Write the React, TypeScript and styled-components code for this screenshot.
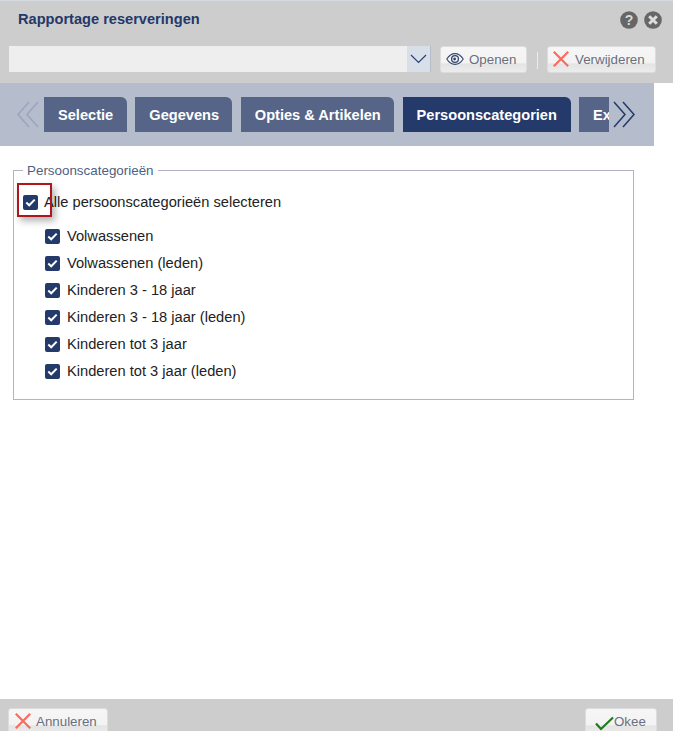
import styled, { createGlobalStyle } from 'styled-components'

const GlobalStyle = createGlobalStyle`
  html, body {
    margin: 0;
    padding: 0;
    height: 100%;
    overflow: hidden;
    background: #fff;
  }
  * { box-sizing: border-box; }
`

const Dialog = styled.div`
  width: 673px;
  height: 731px;
  display: flex;
  flex-direction: column;
  font-family: "Liberation Sans", Arial, sans-serif;
  font-size: 14.67px;
  color: #222;
`

const Header = styled.header`
  height: 83px;
  flex: none;
  background: #cdcdcd;
  border-top: 1px solid #d6dae2;
  padding: 10px 17px 0 9px;
`

const TitleRow = styled.div`
  height: 35px;
  display: flex;
  justify-content: space-between;
  padding-left: 9px;
`

const Title = styled.h1`
  margin: 0;
  font-size: 14.6px;
  line-height: 16px;
  font-weight: bold;
  color: #24386a;
`

const RoundIcons = styled.div`
  display: flex;
  gap: 6px;
  margin-right: -6px;
  height: 18px;
`

const ToolRow = styled.div`
  display: flex;
  align-items: flex-start;
`

const SelectBox = styled.div`
  width: 422px;
  height: 26px;
  background: #eeeeee;
  display: flex;
  justify-content: flex-end;
  margin-right: 9px;
`

const SelectArrow = styled.div`
  width: 24px;
  height: 26px;
  background: #d9dfe8;
  border-right: 1px solid #b5bccc;
  display: flex;
  align-items: center;
  justify-content: center;
`

const Button = styled.button<{ $width: number; $gap?: number; $pad?: number }>`
  width: ${p => p.$width}px;
  height: 27px;
  flex: none;
  padding: 0 0 1px ${p => p.$pad ?? 5}px;
  display: flex;
  align-items: center;
  gap: ${p => p.$gap ?? 5}px;
  border: 1px solid #dcdcdc;
  border-radius: 3px;
  background: linear-gradient(180deg, #f6f6f6 0%, #f3f3f3 62%, #e4e4e4 68%, #ececec 100%);
  font-family: inherit;
  font-size: 13.33px;
  color: #68707f;
`

const OkTick = styled.svg`
  margin-top: 4px;
`

const Separator = styled.div`
  width: 1px;
  height: 17px;
  margin: 6px 9px 0 10px;
  background: #ececec;
`

const TabBar = styled.nav`
  width: 654px;
  height: 63px;
  flex: none;
  background: #b5bccc;
  padding: 14px 0 0 17px;
  display: flex;
  align-items: flex-start;
`

const ChevronSlot = styled.div<{ $right?: boolean }>`
  width: 22px;
  height: 35px;
  flex: none;
  margin: ${p => (p.$right ? '0 0 0 4px' : '0 5px 0 0')};
  display: flex;
  align-items: center;
`

const TabStrip = styled.div`
  width: 565px;
  display: flex;
  gap: 8.5px;
  overflow: hidden;
`

const Tab = styled.div<{ $active?: boolean; $width: number }>`
  width: ${p => p.$width}px;
  height: 35px;
  flex: none;
  padding-left: 14px;
  border-radius: 0 6px 0 0;
  background: ${p => (p.$active ? '#233a6b' : '#566587')};
  color: #fff;
  font-size: 14.6px;
  font-weight: bold;
  line-height: 36px;
  white-space: nowrap;
`

const Content = styled.main`
  flex: 1;
  padding: 17px 0 0 13px;
`

const Group = styled.fieldset`
  width: 621px;
  height: 237px;
  margin: 0;
  padding: 0 0 0 9px;
  border: 1px solid #b3b3c6;
`

const Legend = styled.legend`
  margin-left: 0;
  padding: 0 4px;
  font-size: 13.4px;
  line-height: 15px;
  color: #4d5f85;
`

const MasterRow = styled.label`
  position: relative;
  display: flex;
  align-items: center;
  gap: 6px;
  height: 18px;
  margin-top: 15px;
  margin-bottom: 16px;
`

const Highlight = styled.span`
  position: absolute;
  left: -6px;
  top: -10px;
  width: 35px;
  height: 34px;
  border: 2px solid #b0151c;
  box-shadow: 3px 4px 7px rgba(0, 0, 0, 0.3);
`

const ChildList = styled.div`
  display: flex;
  flex-direction: column;
  gap: 9px;
  padding-left: 22px;
`

const ChildRow = styled.label`
  display: flex;
  align-items: center;
  gap: 7px;
  height: 18px;
`

const Box = styled.span`
  width: 15px;
  height: 15px;
  flex: none;
  border-radius: 2px;
  background: #233a6b;
  display: flex;
  align-items: center;
  justify-content: center;
`

const Footer = styled.footer`
  height: 32px;
  flex: none;
  background: #cdcdcd;
  padding: 9px 16px 0 8px;
  display: flex;
  justify-content: space-between;
  overflow: hidden;
`

const Check = () => (
  <Box>
    <svg width="11" height="9" viewBox="0 0 11 9">
      <path d="M1.3 4.6 4.2 7.3 9.7 1.6" fill="none" stroke="#fff" strokeWidth="2" />
    </svg>
  </Box>
)

const Cross = () => (
  <svg width="16" height="16" viewBox="0 0 16 16">
    <path d="M.8.8 15.2 15.2M15.2.8.8 15.2" stroke="#fa6a5e" strokeWidth="2.2" fill="none" />
  </svg>
)

const Chevrons = ({ dir, color }: { dir: 'left' | 'right'; color: string }) => (
  <svg width="22" height="27" viewBox="0 0 22 27">
    <path
      d={dir === 'left' ? 'M12 1 1 13.5 12 26M21 1 10 13.5 21 26' : 'M1 1 12 13.5 1 26M10 1 21 13.5 10 26'}
      fill="none"
      stroke={color}
      strokeWidth="1.5"
    />
  </svg>
)

const categories = [
  'Volwassenen',
  'Volwassenen (leden)',
  'Kinderen 3 - 18 jaar',
  'Kinderen 3 - 18 jaar (leden)',
  'Kinderen tot 3 jaar',
  'Kinderen tot 3 jaar (leden)',
]

export default function App() {
  return (
    <Dialog>
      <GlobalStyle />
      <Header>
        <TitleRow>
          <Title>Rapportage reserveringen</Title>
          <RoundIcons>
            <svg width="18" height="18" viewBox="0 0 18 18">
              <circle cx="9" cy="9" r="8.8" fill="#666" />
              <text x="9" y="13.8" textAnchor="middle" fontSize="14" fontWeight="bold" fontFamily="Liberation Sans" fill="#d8d8d8">?</text>
            </svg>
            <svg width="18" height="18" viewBox="0 0 18 18">
              <circle cx="9" cy="9" r="8.8" fill="#666" />
              <path d="M5.2 5.2 12.8 12.8M12.8 5.2 5.2 12.8" stroke="#ddd" strokeWidth="3" />
            </svg>
          </RoundIcons>
        </TitleRow>
        <ToolRow>
          <SelectBox>
            <SelectArrow>
              <svg width="17" height="10" viewBox="0 0 17 10">
                <path d="M1 1 8.5 8.5 16 1" fill="none" stroke="#2a4270" strokeWidth="1.2" />
              </svg>
            </SelectArrow>
          </SelectBox>
          <Button $width={87}>
            <svg width="18" height="14" viewBox="0 0 18 14">
              <path d="M.8 7C3 3.4 5.8 1.6 9 1.6S15 3.4 17.2 7C15 10.6 12.2 12.4 9 12.4S3 10.6.8 7Z" fill="none" stroke="#34466f" strokeWidth="1.1" />
              <circle cx="9" cy="7" r="3.4" fill="none" stroke="#34466f" strokeWidth="1.3" />
              <circle cx="8.6" cy="7" r="1.4" fill="#34466f" />
            </svg>
            Openen
          </Button>
          <Separator />
          <Button $width={109} $gap={6}>
            <Cross />
            Verwijderen
          </Button>
        </ToolRow>
      </Header>
      <TabBar>
        <ChevronSlot>
          <Chevrons dir="left" color="#9aa5bd" />
        </ChevronSlot>
        <TabStrip>
          <Tab $width={82.8}>Selectie</Tab>
          <Tab $width={97}>Gegevens</Tab>
          <Tab $width={153.3}>Opties &amp; Artikelen</Tab>
          <Tab $width={168} $active>Persoonscategorien</Tab>
          <Tab $width={80}>Extra</Tab>
        </TabStrip>
        <ChevronSlot $right>
          <Chevrons dir="right" color="#233a6b" />
        </ChevronSlot>
      </TabBar>
      <Content>
        <Group>
          <Legend>Persoonscategorieën</Legend>
          <MasterRow>
            <Highlight />
            <Check />
            Alle persoonscategorieën selecteren
          </MasterRow>
          <ChildList>
            {categories.map(name => (
              <ChildRow key={name}>
                <Check />
                {name}
              </ChildRow>
            ))}
          </ChildList>
        </Group>
      </Content>
      <Footer>
        <Button $width={100} $pad={6}>
          <Cross />
          Annuleren
        </Button>
        <Button $width={72} $gap={0} $pad={9}>
          <OkTick width="19" height="16" viewBox="0 0 19 16">
            <path d="M1 8.5 6 14 18 2.5" fill="none" stroke="#1f7a1f" strokeWidth="2.2" />
          </OkTick>
          Okee
        </Button>
      </Footer>
    </Dialog>
  )
}
